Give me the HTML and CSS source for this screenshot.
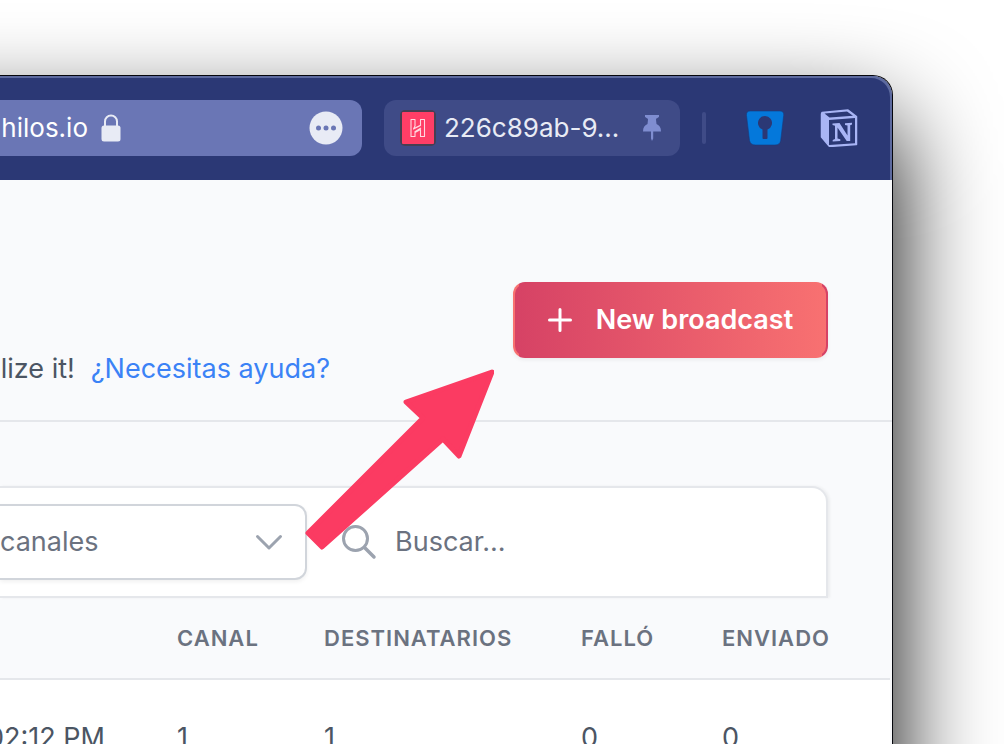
FILE: index.html
```html
<!DOCTYPE html>
<html lang="es">
<head>
<meta charset="utf-8">
<title>Hilos</title>
<link rel="stylesheet" href="styles.css">
</head>
<body>
<div class="window">
  <header class="toolbar">
    <div class="address">
      <div class="address-host">
        <span>.hilos.io</span>
        <svg class="lock" width="20" height="28" viewBox="0 0 20 28" aria-hidden="true"><path d="M4 13V7.500a6 6 0 0 1 12 0V13" fill="none" stroke="#e8ebf5" stroke-width="2"/><rect x="0.500" y="11.500" width="19" height="16" rx="2.500" fill="#e8ebf5"/></svg>
      </div>
      <button class="icon-button" type="button" aria-label="Más opciones">
        <svg width="34" height="34" viewBox="0 0 34 34"><circle cx="17" cy="17" r="16.500" fill="#e8ebf5"/><g fill="#6a76b5"><circle cx="9.500" cy="17" r="2.500"/><circle cx="17" cy="17" r="2.500"/><circle cx="24.500" cy="17" r="2.500"/></g></svg>
      </button>
    </div>
    <button class="tab" type="button">
      <svg width="36" height="36" viewBox="0 0 36 36" aria-hidden="true"><rect width="36" height="36" rx="5" fill="#463f52"/><rect x="2" y="2" width="32" height="32" rx="1" fill="#ff3e66"/><path d="M11 9.500h4v6.500l-1.500 3 7-3.500v-6h4v17h-4v-7l-5.500 3v4h-4zM15 18l6-3M14.500 22l6.500-4" fill="none" stroke="#ffd9e0" stroke-width="1.100" stroke-linejoin="round"/></svg>
      <span class="tab-title">226c89ab-9...</span>
      <svg width="20" height="28" viewBox="0 0 20 28" aria-hidden="true"><path d="M3 1h14v1.500c0 1.300-3 1.500-3 3l.5 4.500c3 1.500 4.500 3.500 4.500 7.500H1c0-4 1.500-6 4.500-7.500L6 5.500c0-1.500-3-1.700-3-3zM9 17h2.200v7.500L10 27l-1-2.500z" fill="#7f8dd0"/></svg>
    </button>
    <span class="separator"></span>
    <div class="extensions">
      <button class="icon-button" type="button" aria-label="Bitwarden">
        <svg width="38" height="38" viewBox="0 0 38 38"><path d="M4 2h30q4.200 0 3.700 4.500l-3 25Q34 36 29 36H9.500Q4.500 36 3.500 31.500L.5 6.500Q0 2 4 2z" fill="#0478db" stroke="#1a3a7c" stroke-width=".6"/><path d="M16.500 29v-8.500a7 7 0 1 1 5 0V29q0 1-1 1h-3q-1 0-1-1z" fill="#2b3875"/></svg>
      </button>
      <button class="icon-button" type="button" aria-label="Notion">
        <svg width="38" height="38" viewBox="0 0 38 38"><path d="M2 3.500 28 1l8.500 6.500V35.500L9.500 37.500 1.500 28V5z" fill="#a9b5f5" stroke="#a9b5f5" stroke-width="1.500" stroke-linejoin="round"/><path d="M4.500 4.500 27 2.500l6 4.200L9.500 8.500zM9 11l26-2v25.300L9 36z" fill="#2b3875"/><path d="M12.500 14.500 19.500 14l8 12.500V16.500L25 16v-1.700l7-.5v1.700l-1.800.7V32h-3.500L17.500 18.500v11l2.800.8V32l-7.600.5V31l2.300-1V16.700l-2.500-.7z" fill="#a9b5f5"/></svg>
      </button>
    </div>
  </header>

  <main class="page">
    <section class="heading">
      <div class="intro">
        <p class="intro-text">lize it!</p>
        <a class="help" href="#">¿Necesitas ayuda?</a>
      </div>
      <button class="primary" type="button">
        <svg width="24" height="24" viewBox="0 0 24 24" aria-hidden="true"><path d="M12 1.500v21M1.500 12h21" stroke="#fff" stroke-width="3" stroke-linecap="round"/></svg>
        <span>New broadcast</span>
      </button>
    </section>

    <section class="filters">
      <div class="select-box">
        <select class="select" aria-label="Canales"><option>canales</option></select>
        <svg class="chevron" width="28" height="18" viewBox="0 0 28 18" aria-hidden="true"><path d="M2.500 2.500 14 14 25.500 2.500" fill="none" stroke="#9ca3af" stroke-width="3" stroke-linecap="round" stroke-linejoin="round"/></svg>
      </div>
      <label class="search">
        <svg width="36" height="36" viewBox="0 0 36 36" aria-hidden="true"><circle cx="14.500" cy="14.500" r="12" fill="none" stroke="#9ca3af" stroke-width="3"/><path d="m23.500 23.500 9.500 9.500" stroke="#9ca3af" stroke-width="3.500" stroke-linecap="round"/></svg>
        <input class="search-input" type="search" placeholder="Buscar..." aria-label="Buscar">
      </label>
    </section>

    <table class="table">
      <colgroup><col class="col-date"><col class="col-channel"><col class="col-to"><col class="col-failed"><col></colgroup>
      <thead>
        <tr><td></td><th scope="col">Canal</th><th scope="col">Destinatarios</th><th scope="col">Falló</th><th scope="col">Enviado</th></tr>
      </thead>
      <tbody>
        <tr><td><div class="date">02:12 PM</div></td><td>1</td><td>1</td><td>0</td><td>0</td></tr>
      </tbody>
    </table>
  </main>
</div>
<svg class="arrow" width="192" height="184" viewBox="0 0 192 184" aria-hidden="true"><path d="M190 4 104 34l17 16L6 165l14 14L141 71l16 17z" fill="#fb3b62" stroke="#fb3b62" stroke-width="5" stroke-linejoin="round"/></svg>
</body>
</html>
```
FILE: styles.css
```css
* { box-sizing: border-box; }

body {
  margin: 0;
  height: 100vh;
  padding: 75px 111px 0 0;
  overflow: hidden;
  background: #fff;
  color: #4b5563;
  font: 27px/40px Inter, "Liberation Sans", sans-serif;
}

button, input, select { font: inherit; }
button { border: 0; padding: 0; cursor: pointer; }
svg { display: block; flex: none; }

/* The window runs past the left and bottom edges of the view. */
.window {
  height: 100vh;
  margin-left: -200px;
  padding-left: 200px;
  display: flex;
  flex-direction: column;
  overflow: hidden;
  background: #fff;
  border: 1px solid #05060c;
  border-left: 0;
  border-radius: 20px;
  box-shadow: 0 48px 100px #000;
}

.toolbar {
  display: flex;
  align-items: center;
  padding: 24px 34px 24px 200px;
  margin-left: -200px;
  background: #2b3875;
  border-radius: 19px 19px 0 0;
  box-shadow: inset -2px 2px 0 #5d6a9f;
  font-size: 26px;
}

.address {
  flex: 1;
  height: 56px;
  padding-right: 19px;
  display: flex;
  align-items: center;
  justify-content: space-between;
  background: #6a76b5;
  border-radius: 0 12px 12px 0;
  color: #fff;
}
.address-host {
  width: 121px;
  display: flex;
  align-items: center;
  justify-content: flex-end;
  gap: 13px;
}
.icon-button { background: none; }

.tab {
  width: 296px;
  height: 56px;
  margin: 0 22px;
  padding: 0 18px 0 16px;
  display: flex;
  align-items: center;
  background: #3f4b87;
  border-radius: 12px;
  color: #e8ebf5;
}
.tab-title { flex: 1; margin-left: 8px; text-align: left; }

.separator { width: 4px; height: 32px; border-radius: 2px; background: #3f4b87; }
.extensions { display: flex; gap: 36px; margin-left: 40px; }

.page { flex: 1; margin-left: -200px; padding-left: 200px; background: #f9fafc; }

.heading {
  height: 242px;
  padding: 102px 64px 31px 0;
  display: flex;
  justify-content: space-between;
  align-items: flex-start;
  border-bottom: 2px solid #e5e7eb;
}
.intro {
  width: 330px;
  align-self: flex-end;
  display: flex;
  justify-content: flex-end;
  gap: 16px;
  white-space: nowrap;
}
.intro-text { margin: 0; }
.help { color: #3b82f6; text-decoration: none; }

.primary {
  width: 315px;
  height: 76px;
  display: flex;
  align-items: center;
  justify-content: center;
  gap: 24px;
  border: 2px solid transparent;
  border-radius: 12px;
  background: linear-gradient(to right, #d64265, #f87171) padding-box, linear-gradient(to right, #f87171 2%, #d64265 2%, #f87171 98%, #d64265 98%) border-box;
  box-shadow: 0 2px 4px rgba(0, 0, 0, .06);
  color: #fff;
  font-weight: 600;
}

.filters {
  height: 112px;
  margin: 64px 64px 0 0;
  display: flex;
  align-items: center;
  background: #fff;
  border: 2px solid #e5e7eb;
  border-left: 0;
  border-radius: 0 16px 0 0;
  box-shadow: 2px 0 3px rgba(0, 0, 0, .05);
  color: #6b7280;
}
.select-box { position: relative; width: 307px; }
.select {
  width: 100%;
  height: 76px;
  padding: 0;
  appearance: none;
  background: #fff;
  border: 2px solid #d1d5db;
  border-left: 0;
  border-radius: 0 12px 12px 0;
  box-shadow: 0 2px 4px rgba(0, 0, 0, .06);
  color: inherit;
}
.chevron { position: absolute; right: 24px; top: 30px; pointer-events: none; }
.search { flex: 1; display: flex; align-items: center; gap: 18px; padding-left: 34px; }
.search-input {
  flex: 1;
  min-width: 0;
  padding: 0;
  border: 0;
  outline: 0;
  background: none;
  color: inherit;
}
.search-input::placeholder { color: #6b7280; opacity: 1; }

.table {
  width: calc(100% - 2px);
  table-layout: fixed;
  border-collapse: collapse;
}
.col-date { width: 177px; }
.col-channel { width: 147px; }
.col-to { width: 257px; }
.col-failed { width: 141px; }
.table th, .table td { padding: 0; text-align: left; }
.table thead tr { height: 81px; border-bottom: 2px solid #e5e7eb; }
.table th {
  color: #6b7280;
  font-size: 22px;
  font-weight: 600;
  letter-spacing: 1px;
  text-transform: uppercase;
}
.table tbody tr { height: 116px; background: #fff; }
.date {
  width: 105px;
  display: flex;
  justify-content: flex-end;
  white-space: nowrap;
}

.arrow { position: absolute; left: 302px; top: 368px; }
```
